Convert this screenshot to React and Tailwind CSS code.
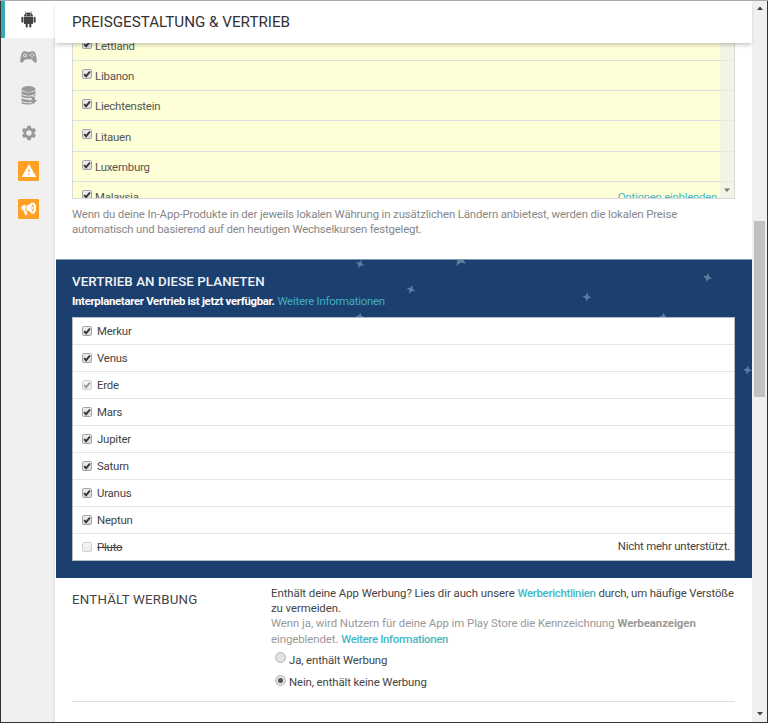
import { MdSettings, MdWarning } from "react-icons/md";

const countries = [
  { name: "Libanon", row: "h-[30px]" },
  { name: "Liechtenstein", row: "h-[30px]" },
  { name: "Litauen", row: "h-[31px]" },
  { name: "Luxemburg", row: "h-[30px]" },
];

const planets = ["Merkur", "Venus", "Erde", "Mars", "Jupiter", "Saturn", "Uranus", "Neptun", "Pluto"];

const stars = [
  { x: 304, y: 4, s: 4.5, r: 15 },
  { x: 404, y: 0, s: 7, r: 30 },
  { x: 355, y: 29.5, s: 4.5, r: 20 },
  { x: 531, y: 37, s: 4.5, r: 5 },
  { x: 651.5, y: 17.5, s: 4.5, r: 15 },
  { x: 304, y: 57, s: 4.5, r: 5 },
  { x: 607.5, y: 57, s: 4.5, r: 5 },
  { x: 691.5, y: 110, s: 4.5, r: 5 },
];

function Check({ on = true, muted = false }) {
  return (
    <svg viewBox="0 0 10 10" className={muted ? "h-[10px] w-[10px] shrink-0 opacity-50" : "h-[10px] w-[10px] shrink-0"}>
      <defs>
        <linearGradient id="control" x1="0" y1="0" x2="0" y2="1">
          <stop offset="0" stopColor="#eeeeee" />
          <stop offset="1" stopColor="#d8d8d8" />
        </linearGradient>
      </defs>
      <rect x="0.5" y="0.5" width="9" height="9" rx="1.2" fill="url(#control)" stroke="#a4a4a4" />
      {on && <path d="M2.200 5.200 4.100 7.200 8 2.500" fill="none" stroke="#353535" strokeWidth="1.9" />}
    </svg>
  );
}

function Radio({ on }) {
  return (
    <svg viewBox="0 0 11 11" className="h-[11px] w-[11px] shrink-0">
      <circle cx="5.5" cy="5.5" r="4.9" fill="#e3e3e3" stroke="#a9a9a9" strokeWidth="0.9" />
      {on && <circle cx="5.5" cy="5.5" r="2.5" fill="#555" />}
    </svg>
  );
}

function AndroidIcon() {
  return (
    <svg viewBox="0 0 16 18" className="h-[17px] w-[15px]" fill="#424242">
      <path d="m4.400.4 1.100 1.600M11.600.4l-1.100 1.600" stroke="#424242" strokeWidth=".7" />
      <path fillRule="evenodd" d="M3.200 5.700a4.800 4.300 0 0 1 9.600 0zM5.500 3.500h1v1h-1zM9.500 3.500h1v1h-1z" />
      <path d="M3.200 6.300h9.600v7.400H3.200z" />
      <rect x="5" y="12" width="2.200" height="5.500" rx="1" />
      <rect x="8.800" y="12" width="2.200" height="5.500" rx="1" />
      <rect x=".4" y="6" width="2.200" height="6.500" rx="1.100" />
      <rect x="13.400" y="6" width="2.200" height="6.500" rx="1.100" />
    </svg>
  );
}

function GamepadIcon() {
  return (
    <svg viewBox="0 0 17 12" className="h-[12px] w-[17px]">
      <path d="M4.200.3h2l.8.800h3l.8-.8h2c1.500 0 2.200.9 2.600 2.300.8 2.600 1.600 5.800 1.400 7.600-.2 1.600-1.700 1.900-2.800.8L11.500 8.300h-6L3 11C1.900 12.100.4 11.800.2 10.200 0 8.400.8 5.200 1.600 2.600 2 1.200 2.700.3 4.200.3z" fill="#999" />
      <circle cx="5" cy="4.300" r="1.900" fill="#ececec" />
      <path d="M5 3v2.600M3.700 4.300h2.600" stroke="#999" strokeWidth=".8" />
      <g fill="#ececec">
        <circle cx="12" cy="2.600" r=".75" />
        <circle cx="12" cy="6" r=".75" />
        <circle cx="10.300" cy="4.300" r=".75" />
        <circle cx="13.700" cy="4.300" r=".75" />
      </g>
    </svg>
  );
}

function DatabaseIcon() {
  return (
    <svg viewBox="0 0 17 19" className="h-[19px] w-[17px]" fill="#999">
      <ellipse cx="7.5" cy="3" rx="7" ry="2.9" />
      <path d="M.5 4.600c2 2.600 12 2.600 14 0v3c-2 2.700-12 2.700-14 0z" />
      <path d="M.5 8.500c2 2.600 12 2.600 14 0v1.400h-3.300v1.900c-4 .8-9.200.3-10.700-1.300z" />
      <path d="M.5 11.800c1.500 1.700 5 2.200 8 1.900l1.600 2.600c-3 .4-8 .1-9.600-1.500z" />
      <path d="M.5 15.600c1.600 1.600 6 2 10 1.500l.8.900c-4 1-10 .7-10.800-.9z" />
      <path d="M10.700 10.500h3.200v3.400h2.400l-4 4.300-4-4.300h2.400z" />
    </svg>
  );
}

function MegaphoneIcon() {
  return (
    <svg viewBox="0 0 16 14" className="h-[14px] w-[16px]" fill="#fff">
      <path d="M4.800 3.300v5.200H2.600A2.300 2.300 0 0 1 .4 6.200v-.7a2.300 2.300 0 0 1 2.200-2.200z" />
      <path d="M2.500 9.100h3l1 3.300-2.200.9z" />
      <path fillRule="evenodd" d="M5.600 3.200C8 3 9.600 1.800 10.800.5h1.700c3.500 1 3.500 9.800 0 11.300h-1.700C9.600 10.200 8 9 5.600 8.600zM11.500 2c-1.300 2-1.300 6 0 8 1.600-1.600 1.600-6.400 0-8z" />
      <path d="M11.100 4.300c1.600.3 1.600 3 0 3.400z" />
    </svg>
  );
}

function Sidebar() {
  return (
    <nav className="flex w-[55px] shrink-0 flex-col border-l border-[#333] bg-[#f0f0f0] shadow-[inset_-3px_0_3px_-2px_#ddd]">
      <div className="flex h-[37px] items-center justify-center border-l-4 border-[#37a9b5] bg-white pr-[3px]">
        <AndroidIcon />
      </div>
      <div className="flex h-[38px] items-center justify-center pl-px"><GamepadIcon /></div>
      <div className="flex h-[38px] items-center justify-center pl-[3px]"><DatabaseIcon /></div>
      <div className="flex h-[38px] items-center justify-center pl-[2px] text-[#999]">
        <MdSettings className="h-[18px] w-[18px]" />
      </div>
      <div className="flex h-[38px] items-center justify-center pl-px">
        <span className="flex h-[20px] w-[21px] items-center justify-center rounded-[1px] bg-[#ffa126]">
          <MdWarning className="h-[16px] w-[16px] text-white" />
        </span>
      </div>
      <div className="flex h-[38px] items-center justify-center pl-px">
        <span className="flex h-[20px] w-[21px] items-center justify-center rounded-[1px] bg-[#ffa126]">
          <MegaphoneIcon />
        </span>
      </div>
    </nav>
  );
}

function CountryList() {
  return (
    <div className="ml-[16px] mr-[17px] flex h-[156px] overflow-hidden border-x border-b border-[#d9d9d9] bg-[#feffd6] tracking-[-0.2px] text-[#555]">
      <div className="flex min-w-0 flex-1 flex-col">
        <div className="flex h-[18px] shrink-0 items-end overflow-hidden border-b border-[#dedede] pl-[9px]">
          <span className="mb-[11px] flex"><Check /></span>
          <span className="mb-[6px] ml-[3px] leading-[15px]">Lettland</span>
        </div>
        {countries.map((c) => (
          <div key={c.name} className={`flex shrink-0 items-center border-b border-[#dedede] pl-[9px] ${c.row}`}>
            <span className="mb-[4px] flex"><Check /></span>
            <span className="ml-[3px] mt-[2px] leading-[15px]">{c.name}</span>
          </div>
        ))}
        <div className="flex h-[16px] shrink-0 items-start overflow-hidden pl-[9px] pr-[3px]">
          <span className="mt-[8px] flex"><Check /></span>
          <span className="ml-[3px] mt-[8px] leading-[15px]">Malaysia</span>
          <span className="ml-auto mt-[8px] leading-[15px] tracking-[-0.25px] text-[#45b8c6]">Optionen einblenden</span>
        </div>
      </div>
      <div className="flex w-[14px] flex-col bg-[#f4f4e6]">
        <div className="h-[18px] border-b border-[#e8e8e2]" />
        {countries.map((c) => <div key={c.name} className={`border-b border-[#e8e8e2] ${c.row}`} />)}
        <svg viewBox="0 0 14 12" className="mt-auto h-[12px] w-[14px]"><path d="M4 2.500h6L7 6z" fill="#777" /></svg>
      </div>
    </div>
  );
}

function PlanetSection() {
  return (
    <section className="relative mt-[22px] h-[319px] shrink-0 overflow-hidden border-t border-[#8296ad] bg-[#1b406f] pl-[16px] pr-[17px]">
      <svg viewBox="0 0 696 318" className="absolute left-0 top-0 h-[318px] w-[696px]">
        {stars.map((s, i) => (
          <path key={i} d="M0-1 .3-.3 1 0 .3.3 0 1-.3.3-1 0-.3-.3z" fill="#5d7b9f" transform={`translate(${s.x} ${s.y}) rotate(${s.r}) scale(${s.s})`} />
        ))}
      </svg>
      <div className="relative">
        <h2 className="pt-[12px] text-[13.3px] font-medium leading-[19px] tracking-[0.08px] text-[#f0f3f6]">VERTRIEB AN DIESE PLANETEN</h2>
        <p className="mt-[3px] leading-[15px] text-white">
          <b className="tracking-[-0.31px]">Interplanetarer Vertrieb ist jetzt verfügbar.</b> <a className="tracking-[-0.25px] text-[#42aec2]">Weitere Informationen</a>
        </p>
        <div className="mt-[8px] border border-[#b4bbc3] bg-white tracking-[-0.2px] text-[#444]">
          {planets.map((p) => (
            <div key={p} className="flex h-[27px] items-center border-b border-[#e5e5e5] pl-[9px] pr-[4px] last:h-[26px] last:border-b-0">
              <Check on={p !== "Pluto"} muted={p === "Erde" || p === "Pluto"} />
              <span className={p === "Pluto" ? "ml-[5px] pt-px line-through" : "ml-[5px] pt-[2px]"}>{p}</span>
              {p === "Pluto" && <span className="ml-auto">Nicht mehr unterstützt.</span>}
            </div>
          ))}
        </div>
      </div>
    </section>
  );
}

function AdsSection() {
  return (
    <section className="ml-[16px] mr-[17px] flex h-[124px] shrink-0 border-b border-[#ddd] pt-[8px] text-[#444]">
      <h2 className="w-[199px] shrink-0 pt-[4px] text-[13.3px] leading-[20px] tracking-[0.2px] text-[#444]">ENTHÄLT WERBUNG</h2>
      <div className="whitespace-nowrap leading-[15.2px] tracking-[-0.06px]">
        <p>Enthält deine App Werbung? Lies dir auch unsere <a className="font-medium tracking-[-0.3px] text-[#45b8c6]">Werberichtlinien</a> <span className="tracking-[-0.15px]">durch, um häufige Verstöße</span></p>
        <p>zu vermeiden.</p>
        <p className="text-[#999]">Wenn ja, wird Nutzern für deine App im Play Store die Kennzeichnung <b>Werbeanzeigen</b></p>
        <p className="text-[#999]">eingeblendet. <a className="font-medium tracking-[-0.33px] text-[#45b8c6]">Weitere Informationen</a></p>
        <div className="mt-[3px] flex h-[23px] pl-[4px] tracking-[-0.12px]">
          <span className="mt-[2px]"><Radio /></span>
          <span className="ml-[3px] mt-[3px]">Ja, enthält Werbung</span>
        </div>
        <div className="flex h-[23px] pl-[4px] tracking-[-0.12px]">
          <span className="mt-[2px]"><Radio on /></span>
          <span className="ml-[3px] mt-[2px]">Nein, enthält keine Werbung</span>
        </div>
      </div>
    </section>
  );
}

export default function App() {
  return (
    <div className="flex h-[723px] w-[768px] overflow-hidden border-b border-t border-b-[#333] border-t-[#aaa] bg-white font-[Roboto,sans-serif] text-[11.4px]">
      <Sidebar />
      <main className="flex w-[697px] shrink-0 flex-col">
        <header className="relative z-10 flex h-[42px] shrink-0 items-center bg-white pl-[17px] text-[15.2px] text-[#333] shadow-[0_3px_4px_-1px_rgba(0,0,0,0.22)]">
          PREISGESTALTUNG &amp; VERTRIEB
        </header>
        <div className="flex flex-col pl-px">
          <CountryList />
          <p className="mt-[8px] h-[30px] whitespace-nowrap pl-[16px] leading-[15.2px] tracking-[-0.13px] text-[#888]">
            Wenn du deine In-App-Produkte in der jeweils lokalen Währung in zusätzlichen Ländern anbietest, werden die lokalen Preise
            <br />
            <span className="tracking-[-0.18px]">automatisch und basierend auf den heutigen Wechselkursen festgelegt.</span>
          </p>
          <PlanetSection />
          <AdsSection />
        </div>
      </main>
      <aside className="flex w-[16px] shrink-0 flex-col items-center border-r border-[#333] bg-[#f0f0f0]">
        <svg viewBox="0 0 14 14" className="h-[14px] w-[14px]"><path d="M4 9h6L7 5.500z" fill="#444" /></svg>
        <div className="mt-[206px] h-[176px] w-[11px] bg-[#c1c1c1]" />
        <svg viewBox="0 0 14 14" className="mb-[1px] mt-auto h-[14px] w-[14px]"><path d="M4 5h6L7 8.500z" fill="#444" /></svg>
      </aside>
    </div>
  );
}
